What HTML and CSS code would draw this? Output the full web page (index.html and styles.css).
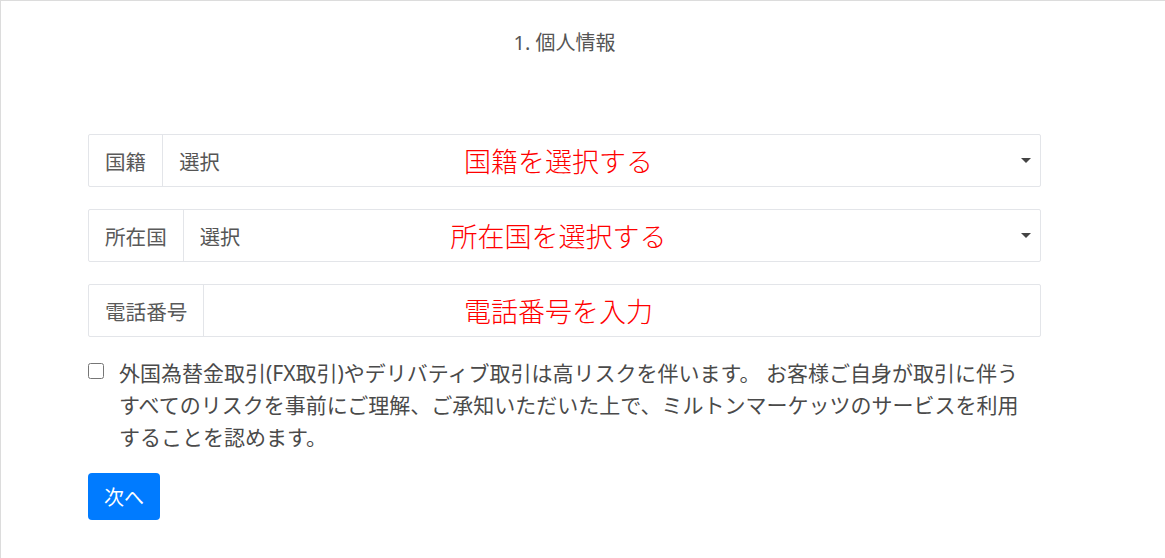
FILE: index.html
```html
<!DOCTYPE html>
<html lang="ja">
    <head>
        <meta charset="UTF-8">
        <meta name="viewport" content="width=device-width, initial-scale=1.0">
        <title>個人情報</title>
        <link rel="stylesheet" href="styles.css">
    </head>

<body>

    <div class="pagina">
        <div class="wizard">
            <h2 class="titulo-passo">1. 個人情報</h2>

            <form class="formulario" onsubmit="return false;">
                <div class="campos">
                    <div class="campo">
                        <span class="campo-label">国籍</span>
                        <div class="campo-controle">
                            <span class="campo-valor">選択</span>
                            <span class="seta"></span>
                        </div>
                        <span class="nota">国籍を選択する</span>
                    </div>

                    <div class="campo">
                        <span class="campo-label">所在国</span>
                        <div class="campo-controle">
                            <span class="campo-valor">選択</span>
                            <span class="seta"></span>
                        </div>
                        <span class="nota">所在国を選択する</span>
                    </div>

                    <div class="campo">
                        <span class="campo-label">電話番号</span>
                        <div class="campo-controle">
                            <input type="tel" class="campo-input">
                        </div>
                        <span class="nota">電話番号を入力</span>
                    </div>
                </div>

                <label class="aceite">
                    <input type="checkbox">
                    <span class="aceite-texto">外国為替金取引(FX取引)やデリバティブ取引は高リスクを伴います。 お客様ご自身が取引に伴うすべてのリスクを事前にご理解、ご承知いただいた上で、ミルトンマーケッツのサービスを利用することを認めます。</span>
                </label>

                <button type="submit" class="botao-proximo">次へ</button>
            </form>
        </div>
    </div>

</body>

</html>
```

FILE: styles.css
```css
* {
    box-sizing: border-box;
}

body {
    margin: 0;
    font-family: "Noto Sans", "Noto Sans CJK JP", sans-serif;
    background-color: #fff;
    color: #555;
}

.pagina {
    min-height: 100vh;
    border-top: 1px solid #dcdcdc;
    border-left: 1px solid #dcdcdc;
}

.wizard {
    width: 953px;
    margin-left: 87px;
    padding-top: 27px;
}

.titulo-passo {
    margin: 0 0 76px;
    font-size: 20px;
    line-height: 30px;
    font-weight: 400;
    text-align: center;
    color: #555;
}

.formulario {
    display: flex;
    flex-direction: column;
}

.campos {
    display: flex;
    flex-direction: column;
    gap: 22px;
}

.campo {
    position: relative;
    display: flex;
    height: 53px;
    border: 1px solid #e3e5e9;
    border-radius: 2px;
}

.campo-label {
    display: flex;
    align-items: center;
    padding: 0 16px;
    border-right: 1px solid #e3e5e9;
    font-size: 20.6px;
    color: #5a5a5a;
}

.campo-controle {
    flex: 1;
    display: flex;
    align-items: center;
    justify-content: space-between;
    padding: 0 9px 0 16px;
    font-size: 20.3px;
    color: #555;
}

.campo-input {
    width: 100%;
    border: none;
    outline: none;
    font: inherit;
    background: transparent;
}

.seta {
    width: 0;
    height: 0;
    border-left: 5px solid transparent;
    border-right: 5px solid transparent;
    border-top: 5px solid #444;
}

/* anotacao vermelha por cima do campo */
.nota {
    position: absolute;
    left: 50%;
    top: 50%;
    transform: translate(-50%, -50%);
    margin-left: -6px;
    font-size: 27px;
    font-weight: 300;
    line-height: 1;
    color: #ff0000;
    white-space: nowrap;
    pointer-events: none;
}

.aceite {
    display: flex;
    align-items: flex-start;
    gap: 15px;
    margin: 20px 0;
    font-size: 21px;
    line-height: 32px;
    color: #4a4a4a;
}

.aceite input {
    flex: none;
    width: 16px;
    height: 16px;
    margin: 6px 0 0;
}

.aceite-texto {
    max-width: 910px;
}

.botao-proximo {
    align-self: flex-start;
    width: 72px;
    height: 47px;
    padding: 0 16px;
    border: none;
    border-radius: 4px;
    background-color: #007bff;
    color: #fff;
    font-family: inherit;
    font-size: 20px;
    cursor: pointer;
}

.botao-proximo:hover {
    background-color: #0069d9;
}
```
